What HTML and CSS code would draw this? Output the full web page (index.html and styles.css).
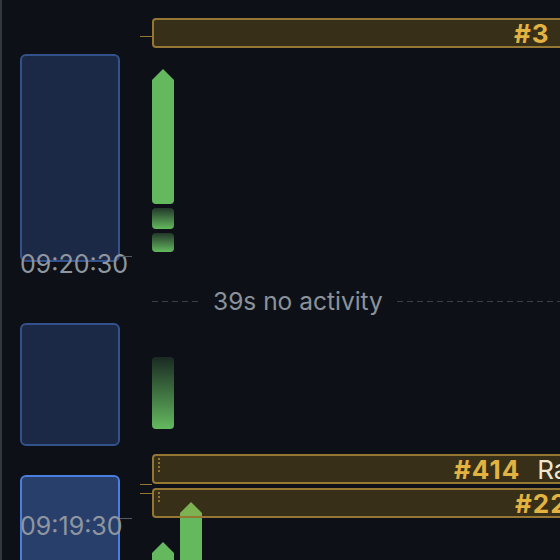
FILE: index.html
```html
<!DOCTYPE html>
<html>
<head>
<meta charset="utf-8">
<link rel="stylesheet" href="styles.css">
</head>
<body>
<div class="timeline">
  <div class="minutes">
    <div class="card card-1"></div>
    <div class="time time-1">09:20:30</div>
    <div class="card card-2"></div>
    <div class="card card-3 active"></div>
    <div class="time time-2">09:19:30</div>
  </div>
  <div class="lane">
    <div class="pr pr-3"><span class="num">#3</span></div>
    <div class="commit arrow tall"></div>
    <div class="commit fade f1"></div>
    <div class="commit fade f2"></div>
    <div class="idle"><span class="dash short"></span><span class="idle-text">39s no activity</span><span class="dash long"></span></div>
    <div class="commit fade f3"></div>
    <div class="pr pr-414"><span class="grip"></span><span class="num">#414</span><span class="title">Rate limit retries</span></div>
    <div class="pr pr-22"><span class="grip"></span><span class="num">#22</span></div>
    <div class="arrows">
      <div class="commit arrow small"></div>
      <div class="commit arrow big"></div>
    </div>
  </div>
</div>
</body>
</html>
```
FILE: styles.css
```css
html, body {
  margin: 0;
  padding: 0;
  background: #0d1117;
  height: 560px;
  overflow: hidden;
  font-family: Inter, "Noto Sans", sans-serif;
}
.timeline {
  display: flex;
  border-left: 2px solid #30363d;
  height: 560px;
  box-sizing: border-box;
}
.minutes {
  width: 100px;
  margin-left: 18px;
  padding-top: 54px;
  flex: none;
}
.card {
  box-sizing: border-box;
  border-radius: 6px;
  border: 2px solid #33528c;
  background: #1c2946;
}
.card-1 { height: 208px; }
.card-2 { height: 123px; margin-top: 46.5px; }
.card-3 { height: 120px; margin-top: 29px; }
.card.active { background: #283f6c; border-color: #4a7fdf; }
.time {
  position: relative;
  font-size: 25px;
  line-height: 26px;
  color: #8f969f;
  white-space: nowrap;
}
.time::after {
  content: "";
  position: absolute;
  left: 100px;
  top: 5px;
  width: 12px;
  height: 1px;
  background: #555b63;
}
.time-1 { margin-top: -11.5px; }
.time-2 { margin-top: -82px; }

.lane {
  margin-left: 32px;
  flex: 1;
  min-width: 0;
}
.pr {
  position: relative;
  z-index: 2;
  box-sizing: border-box;
  height: 30px;
  width: 700px;
  border: 2px solid #957632;
  border-radius: 4px;
  background: rgba(210, 153, 34, 0.22);
  display: flex;
  align-items: center;
  white-space: nowrap;
  font-size: 26px;
}
.pr::before {
  content: "";
  position: absolute;
  left: -14px;
  width: 12px;
  height: 1.5px;
  background: #957632;
}
.pr .num { font-weight: 700; color: #e3b341; letter-spacing: 1px; }
.pr .title { color: #efe6cd; margin-left: 17px; }
.pr-3 { margin-top: 18px; padding-left: 360px; }
.pr-3::before { top: 15.5px; }
.pr-414 { margin-top: 25px; padding-left: 300px; }
.pr-414::before { top: 27.5px; }
.pr-22 { margin-top: 4px; padding-left: 361px; }
.pr-22::before { top: 2.5px; }
.grip {
  position: absolute;
  left: 4px;
  top: 2px;
  width: 2px;
  height: 14px;
  background: repeating-linear-gradient(to bottom, #957632 0 2px, transparent 2px 4px);
}
.pr-22 .grip { height: 12px; }

.commit {
  width: 22px;
  background: #64b95f;
}
.arrow {
  border-radius: 0 0 4px 4px;
  clip-path: polygon(50% 0, 100% 11px, 100% 100%, 0 100%, 0 11px);
}
.tall { margin-top: 21px; height: 135px; }
.fade {
  border-radius: 4px;
  background: linear-gradient(to bottom, #22382a, #64b95f);
}
.f1 { margin-top: 4px; height: 21px; }
.f2 { margin-top: 4px; height: 19px; }
.f3 { margin-top: 44px; height: 72px; background: linear-gradient(to bottom, #1a2a22, #64b95f); }

.idle {
  margin-top: 37px;
  height: 24px;
  display: flex;
  align-items: center;
  white-space: nowrap;
}
.dash {
  height: 1px;
  background: repeating-linear-gradient(to right, #3a4049 0 6px, transparent 6px 10px);
}
.dash.short { width: 48px; flex: none; }
.dash.long { flex: 1; min-width: 0; }
.idle-text {
  color: #8b929b;
  font-size: 24.5px;
  margin: 0 14px 0 13px;
  line-height: 24px;
}
.arrows {
  display: flex;
  gap: 6px;
  align-items: flex-start;
  margin-top: -16px;
}
.small { margin-top: 40px; height: 60px; }
.big { height: 80px; }
```
